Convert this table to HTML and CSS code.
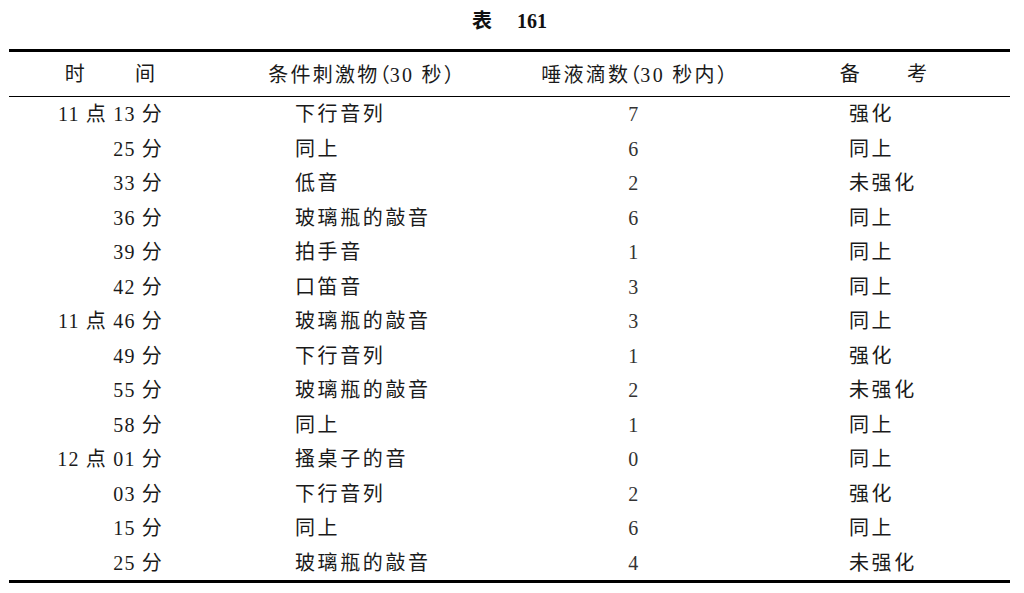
FILE: index.html
```html
<!DOCTYPE html>
<html lang="zh">
<head>
<meta charset="utf-8">
<title>表 161</title>
<link rel="stylesheet" href="styles.css">
</head>
<body>
<div class="page">
  <div class="title"><span class="title-zh">表</span><span class="title-num">161</span></div>
  <table class="data">
    <colgroup>
      <col class="c1"><col class="c2"><col class="c3"><col class="c4">
    </colgroup>
    <thead>
      <tr>
        <th><span class="spread">时</span>间</th>
        <th>条件刺激物<span class="p">（</span>30 秒<span class="p">）</span></th>
        <th>唾液滴数<span class="p">（</span>30 秒内<span class="p">）</span></th>
        <th><span class="spread2">备</span>考</th>
      </tr>
    </thead>
    <tbody>
      <tr><td class="t">11 点 13 分</td><td class="s">下行音列</td><td class="n">7</td><td class="r">强化</td></tr>
      <tr><td class="t">25 分</td><td class="s">同上</td><td class="n">6</td><td class="r">同上</td></tr>
      <tr><td class="t">33 分</td><td class="s">低音</td><td class="n">2</td><td class="r">未强化</td></tr>
      <tr><td class="t">36 分</td><td class="s">玻璃瓶的敲音</td><td class="n">6</td><td class="r">同上</td></tr>
      <tr><td class="t">39 分</td><td class="s">拍手音</td><td class="n">1</td><td class="r">同上</td></tr>
      <tr><td class="t">42 分</td><td class="s">口笛音</td><td class="n">3</td><td class="r">同上</td></tr>
      <tr><td class="t">11 点 46 分</td><td class="s">玻璃瓶的敲音</td><td class="n">3</td><td class="r">同上</td></tr>
      <tr><td class="t">49 分</td><td class="s">下行音列</td><td class="n">1</td><td class="r">强化</td></tr>
      <tr><td class="t">55 分</td><td class="s">玻璃瓶的敲音</td><td class="n">2</td><td class="r">未强化</td></tr>
      <tr><td class="t">58 分</td><td class="s">同上</td><td class="n">1</td><td class="r">同上</td></tr>
      <tr><td class="t">12 点 01 分</td><td class="s">搔桌子的音</td><td class="n">0</td><td class="r">同上</td></tr>
      <tr><td class="t">03 分</td><td class="s">下行音列</td><td class="n">2</td><td class="r">强化</td></tr>
      <tr><td class="t">15 分</td><td class="s">同上</td><td class="n">6</td><td class="r">同上</td></tr>
      <tr><td class="t">25 分</td><td class="s">玻璃瓶的敲音</td><td class="n">4</td><td class="r">未强化</td></tr>
    </tbody>
  </table>
</div>
</body>
</html>
```

FILE: styles.css
```css
html, body {
  margin: 0;
  padding: 0;
  background: #ffffff;
}

body {
  font-family: "Liberation Serif", "Noto Sans CJK SC", serif;
  color: #1a1a1a;
}

.page {
  width: 1001px;
  margin-left: 9px;
}

.title {
  height: 40px;
  line-height: 40px;
  margin-bottom: 9px;
  text-align: center;
  font-weight: bold;
  font-size: 20px;
  color: #111;
}

.title-zh {
  font-family: "Noto Sans CJK SC", sans-serif;
  margin-right: 25px;
}

.title-num {
  font-family: "Liberation Serif", serif;
}

.data {
  width: 1001px;
  border-collapse: collapse;
  table-layout: fixed;
  font-size: 20px;
  letter-spacing: 1.5px;
}

.c1 { width: 204px; }
.c2 { width: 296px; }
.c3 { width: 250px; }
.c4 { width: 251px; }

.data thead tr {
  border-top: 3px solid #000;
  border-bottom: 1px solid #000;
}

.data th {
  height: 44px;
  padding: 0;
  font-weight: normal;
  text-align: center;
  vertical-align: middle;
  line-height: 20px;
  white-space: nowrap;
  letter-spacing: 2.3px;
}

.p {
  font-family: "Noto Sans CJK SC", sans-serif;
  font-feature-settings: "halt" 1;
  letter-spacing: 0;
}

.spread {
  margin-right: 48px;
}

.spread2 {
  margin-right: 45px;
}

.data tbody tr:last-child {
  border-bottom: 3px solid #000;
}

.data td {
  height: 34.5px;
  padding: 0;
  line-height: 20px;
  vertical-align: middle;
  white-space: nowrap;
}

.data td.t {
  text-align: right;
  padding-right: 50px;
  letter-spacing: 1.2px;
}

.data td.s {
  padding-left: 82px;
  letter-spacing: 2.6px;
}

.data td.n {
  text-align: center;
  color: #333;
}

.data td.r {
  padding-left: 90px;
  letter-spacing: 2.6px;
}
```
